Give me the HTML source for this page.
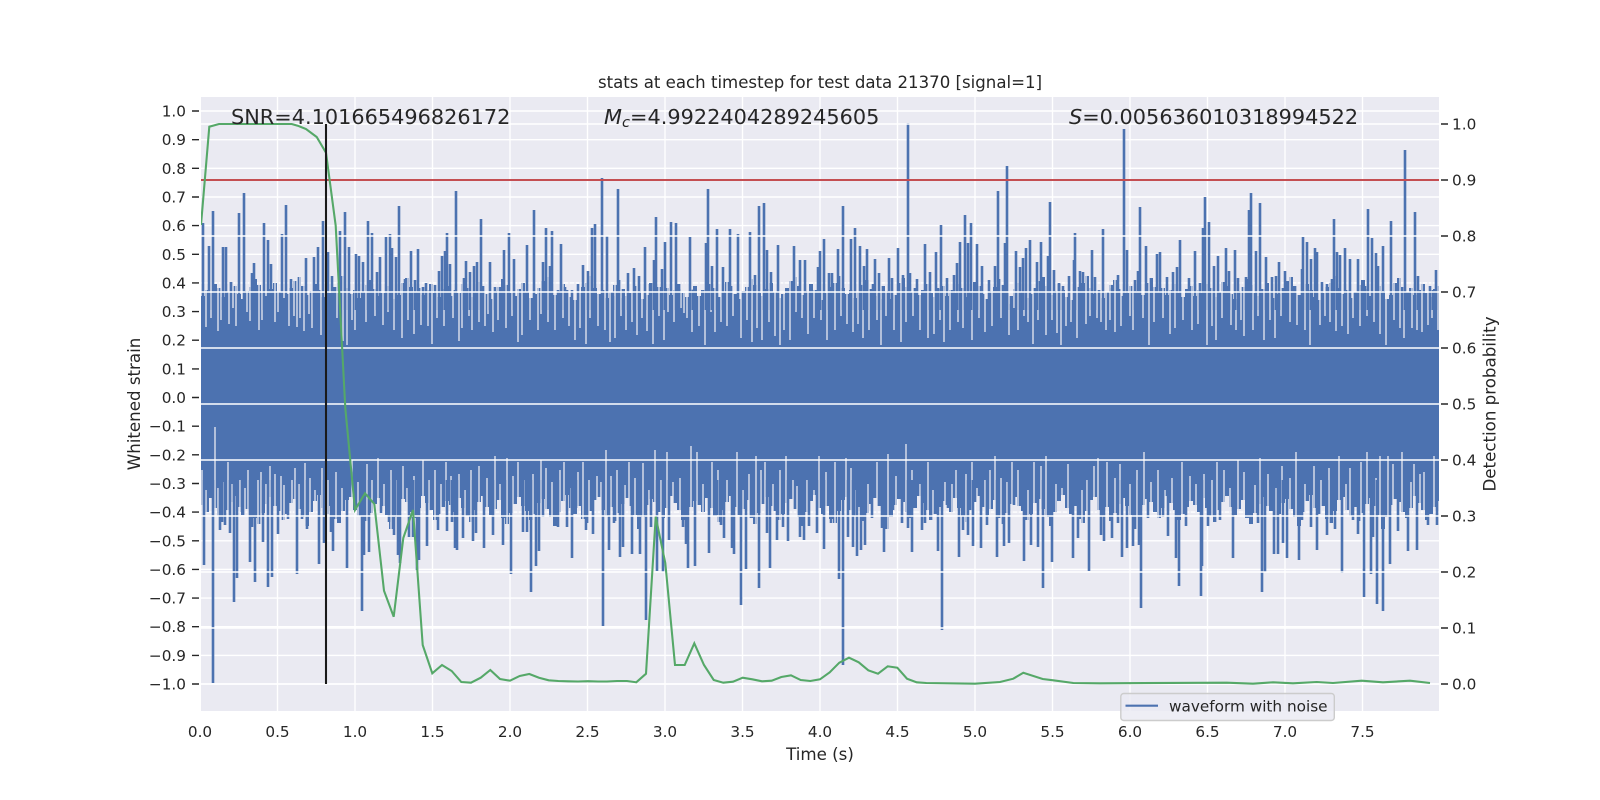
<!DOCTYPE html>
<html><head><meta charset="utf-8"><title>stats at each timestep</title>
<style>html,body{margin:0;padding:0;background:#fff}svg{display:block}text{font-family:"DejaVu Sans","Liberation Sans",sans-serif;fill:#262626}</style>
</head><body>
<svg width="1600" height="800" viewBox="0 0 1600 800" xmlns="http://www.w3.org/2000/svg">
<defs><clipPath id="ax"><rect x="201" y="97" width="1238" height="614"/></clipPath>
<path id="u" d="M0 310V296h4V290h4V293h4V284h4V288h4V297h4V292h4V282h4V286h4V294h4V299h4V291h4V287h4V279h4V285h4V293h4V296h4V289h4V283h4V292h4V298h4V294h4V288h4V281h4V277h4V286h4V295h4V291h4V284h4V290h4V297h4V300h4V293h4V287h4V283h4V276h4V288h4V294h4V290h4V298h4V292h4V285h4V280h4V289h4V296h4V293h4V286h4V291h4V299h4V295h4V283h4V278h4V287h4V292h4V288h4V295h4V290h4V284h4V293h4V297h4V289h4V286h4V310Z"/>
<path id="l" d="M0 480V505h4V512h4V498h4V508h4V516h4V522h4V510h4V502h4V496h4V507h4V515h4V509h4V500h4V518h4V524h4V513h4V504h4V497h4V506h4V511h4V520h4V514h4V503h4V499h4V509h4V517h4V526h4V512h4V501h4V495h4V508h4V514h4V506h4V519h4V523h4V511h4V500h4V497h4V510h4V516h4V507h4V521h4V513h4V504h4V498h4V506h4V515h4V529h4V517h4V505h4V499h4V502h4V512h4V518h4V508h4V496h4V503h4V510h4V520h4V514h4V507h4V501h4V480Z"/>
</defs>
<rect width="1600" height="800" fill="#fff"/>
<rect x="201" y="97" width="1238" height="614" fill="#eaeaf2"/>
<path fill="none" stroke="#fff" stroke-width="1.39" d="M201 111H1439M201 139.7H1439M201 168.3H1439M201 197H1439M201 225.6H1439M201 254.3H1439M201 282.9H1439M201 311.6H1439M201 340.2H1439M201 368.9H1439M201 397.5H1439M201 426.2H1439M201 454.8H1439M201 483.5H1439M201 512.1H1439M201 540.8H1439M201 569.4H1439M201 598.1H1439M201 626.7H1439M201 655.4H1439M201 684H1439M277.5 97V711M355 97V711M432.5 97V711M510 97V711M587.5 97V711M665 97V711M742.5 97V711M820 97V711M897.5 97V711M975 97V711M1052.5 97V711M1130 97V711M1207.5 97V711M1285 97V711M1362.5 97V711"/>
<g clip-path="url(#ax)">
<rect x="201" y="300" width="1238" height="192" fill="#4c72b0"/>
<g fill="#4c72b0"><use href="#u" x="201"/><use href="#u" x="449"/><use href="#u" x="697"/><use href="#u" x="945"/><use href="#u" x="1193"/><use href="#l" x="201"/><use href="#l" x="449"/><use href="#l" x="697"/><use href="#l" x="945"/><use href="#l" x="1193"/></g>
<path fill="none" stroke="#eaeaf2" stroke-width="1.3" d="M206 270V327M211 270V318M218 270V331M221 270V320M229 270V324M233 270V308M236 270V326M247 270V312M250 270V321M259 270V330M262 270V320M275 270V322M278 270V312M289 270V326M294 270V316M297 270V327M300 270V318M304 270V331M309 270V314M312 270V328M321 270V335M326 270V310M337 270V318M343 270V341M347 270V345M352 270V320M355 270V330M366 270V322M375 270V316M383 270V325M388 270V312M394 270V330M402 270V338M408 270V320M414 270V334M421 270V325M428 270V326M432 270V344M437 270V318M444 270V326M453 270V318M459 270V341M462 270V328M469 270V316M472 270V330M479 270V322M485 270V326M488 270V314M493 270V332M498 270V320M506 270V328M512 270V316M518 270V342M522 270V335M530 270V320M538 270V330M541 270V314M548 270V322M555 270V330M563 270V318M569 270V326M575 270V340M580 270V328M586 270V344M590 270V318M598 270V326M605 270V330M610 270V342M615 270V338M621 270V316M626 270V330M632 270V322M637 270V335M642 270V318M647 270V331M653 270V344M659 270V316M664 270V340M668 270V312M674 270V322M681 270V308M684 270V313M687 270V318M692 270V332M699 270V326M705 270V345M711 270V312M715 270V332M721 270V322M727 270V326M733 270V316M741 270V338M747 270V320M752 270V342M757 270V328M762 270V340M769 270V322M775 270V336M780 270V345M784 270V330M790 270V340M796 270V312M802 270V318M808 270V334M814 270V318M821 270V320M827 270V340M835 270V330M841 270V316M847 270V324M853 270V332M858 270V324M863 270V338M869 270V330M877 270V320M881 270V345M886 270V316M894 270V330M901 270V342M906 270V322M913 270V316M920 270V330M928 270V338M934 270V334M940 270V320M944 270V342M950 270V330M958 270V322M963 270V328M972 270V340M979 270V318M985 270V332M992 270V326M1001 270V318M1009 270V335M1014 270V308M1018 270V330M1024 270V316M1028 270V322M1033 270V344M1038 270V320M1046 270V335M1052 270V320M1057 270V333M1061 270V345M1066 270V326M1071 270V322M1077 270V338M1086 270V324M1090 270V316M1097 270V318M1101 270V322M1106 270V330M1110 270V320M1115 270V332M1121 270V326M1130 270V316M1133 270V330M1143 270V318M1149 270V345M1154 270V322M1163 270V318M1170 270V334M1175 270V328M1183 270V320M1192 270V330M1198 270V324M1207 270V345M1212 270V326M1216 270V340M1222 270V318M1231 270V325M1236 270V330M1241 270V320M1244 270V336M1253 270V330M1258 270V316M1264 270V340M1270 270V320M1275 270V338M1281 270V316M1290 270V322M1297 270V325M1305 270V330M1310 270V345M1320 270V325M1325 270V316M1330 270V322M1336 270V331M1342 270V326M1348 270V334M1353 270V318M1360 270V326M1367 270V316M1374 270V322M1380 270V334M1386 270V345M1394 270V320M1400 270V328M1404 270V338M1412 270V328M1417 270V330M1422 270V332M1428 270V325M1432 270V318M1438 270V330"/>
<path fill="none" stroke="#eaeaf2" stroke-width="1.3" d="M202 530V470M206 530V490M215 530V427M218 530V488M224 530V482M228 530V462M232 530V484M240 530V480M245 530V488M248 530V470M258 530V480M261 530V472M266 530V484M270 530V466M275 530V474M281 530V476M284 530V485M292 530V480M295 530V468M299 530V484M305 530V463M310 530V478M315 530V490M322 530V468M328 530V480M336 530V472M342 530V488M352 530V460M358 530V482M367 530V464M372 530V480M378 530V458M384 530V484M391 530V470M397 530V480M403 530V466M407 530V488M414 530V476M423 530V460M429 530V480M435 530V470M441 530V484M446 530V462M451 530V476M459 530V474M465 530V490M471 530V470M479 530V466M487 530V478M495 530V456M500 530V484M507 530V458M513 530V476M518 530V462M524 530V480M533 530V474M541 530V460M546 530V468M552 530V482M560 530V470M564 530V462M571 530V488M578 530V472M583 530V462M589 530V480M597 530V476M601 530V482M606 530V450M611 530V476M617 530V470M625 530V485M629 530V462M635 530V478M643 530V463M649 530V490M655 530V450M661 530V480M667 530V452M673 530V482M680 530V478M691 530V446M697 530V452M703 530V484M712 530V462M718 530V470M727 530V480M737 530V452M743 530V490M749 530V474M756 530V456M761 530V470M765 530V462M773 530V484M780 530V470M786 530V456M793 530V480M797 530V486M807 530V480M814 530V490M819 530V456M826 530V472M835 530V462M846 530V458M851 530V468M856 530V490M868 530V484M877 530V462M888 530V454M896 530V476M906 530V444M912 530V470M920 530V484M928 530V462M933 530V490M945 530V482M952 530V484M956 530V470M966 530V474M972 530V462M977 530V488M985 530V480M990 530V470M995 530V456M1001 530V478M1007 530V482M1012 530V462M1018 530V470M1028 530V490M1034 530V462M1041 530V466M1046 530V456M1056 530V484M1062 530V488M1068 530V464M1082 530V490M1087 530V480M1094 530V466M1098 530V458M1107 530V462M1115 530V478M1120 530V464M1130 530V484M1137 530V470M1144 530V452M1151 530V482M1158 530V470M1165 530V490M1172 530V478M1182 530V462M1190 530V476M1196 530V484M1204 530V474M1212 530V480M1217 530V462M1224 530V470M1230 530V488M1238 530V460M1244 530V472M1255 530V485M1260 530V458M1268 530V474M1276 530V488M1282 530V466M1290 530V478M1296 530V452M1305 530V484M1314 530V466M1321 530V480M1329 530V468M1339 530V456M1346 530V484M1350 530V468M1361 530V462M1367 530V452M1376 530V478M1380 530V456M1388 530V456M1393 530V464M1402 530V452M1411 530V482M1414 530V464M1420 530V474M1424 530V472M1434 530V456"/>
<path fill="none" stroke="#4c72b0" stroke-width="2.6" d="M203 310V223M209 310V246M213 310V211M223 310V247M226 310V247M239 310V213M244 310V193M252 310V273M254 310V263M264 310V223M268 310V240M271 310V264M282 310V234M286 310V205M291 310V279M306 310V258M314 310V257M318 310V247M323 310V221M328 310V252M332 310V276M340 310V231M345 310V212M349 310V247M356 310V254M359 310V256M363 310V262M368 310V221M372 310V233M377 310V272M380 310V257M386 310V237M390 310V234M392 310V248M396 310V257M399 310V206M405 310V279M411 310V251M415 310V280M418 310V249M423 310V287M426 310V283M435 310V285M439 310V271M442 310V256M445 310V251M447 310V233M450 310V264M456 310V191M464 310V278M466 310V261M470 310V272M474 310V266M477 310V262M481 310V219M490 310V262M495 310V287M504 310V250M509 310V233M514 310V259M527 310V245M534 310V210M543 310V262M546 310V228M550 310V266M552 310V231M558 310V290M561 310V244M565 310V287M572 310V290M578 310V284M583 310V265M588 310V271M592 310V228M595 310V224M602 310V178M607 310V236M613 310V296M618 310V189M623 310V298M628 310V273M634 310V268M639 310V276M645 310V247M650 310V284M654 310V260M656 310V217M662 310V269M665 310V242M671 310V222M676 310V223M679 310V289M690 310V237M693 310V290M696 310V297M702 310V298M706 310V243M708 310V189M712 310V266M717 310V229M723 310V267M730 310V229M738 310V234M750 310V232M755 310V275M759 310V206M764 310V203M767 310V250M771 310V272M778 310V245M787 310V293M794 310V246M800 310V260M805 310V260M818 310V267M820 310V251M824 310V239M829 310V273M832 310V273M838 310V249M843 310V206M851 310V239M855 310V228M860 310V246M864 310V266M867 310V249M873 310V284M875 310V259M879 310V273M883 310V299M889 310V258M892 310V278M898 310V248M903 310V275M908 310V123M910 310V273M917 310V279M925 310V244M930 310V272M936 310V252M938 310V288M941 310V225M947 310V278M954 310V275M957 310V263M960 310V242M965 310V215M968 310V243M971 310V223M977 310V244M982 310V266M989 310V280M995 310V266M998 310V191M1005 310V243M1007 310V166M1011 310V304M1016 310V251M1020 310V267M1023 310V258M1026 310V248M1030 310V240M1037 310V262M1041 310V242M1048 310V256M1050 310V202M1054 310V270M1059 310V283M1063 310V286M1069 310V276M1074 310V260M1075 310V233M1080 310V271M1083 310V272M1092 310V250M1095 310V277M1103 310V229M1112 310V288M1118 310V275M1124 310V129M1127 310V250M1135 310V280M1138 310V271M1140 310V207M1146 310V246M1157 310V254M1160 310V252M1167 310V277M1173 310V272M1177 310V267M1180 310V240M1189 310V278M1195 310V251M1200 310V283M1203 310V228M1205 310V197M1209 310V222M1214 310V266M1218 310V256M1226 310V248M1229 310V271M1235 310V250M1238 310V278M1246 310V277M1249 310V210M1251 310V193M1256 310V251M1260 310V203M1266 310V257M1272 310V277M1276 310V276M1279 310V262M1285 310V271M1287 310V282M1294 310V297M1302 310V269M1303 310V237M1307 310V242M1311 310V259M1315 310V248M1317 310V252M1322 310V282M1327 310V284M1332 310V279M1334 310V219M1337 310V252M1340 310V255M1345 310V248M1350 310V259M1358 310V259M1362 310V285M1365 310V286M1368 310V209M1372 310V238M1376 310V253M1378 310V266M1383 310V246M1391 310V221M1397 310V289M1405 310V150M1415 310V212M1418 310V276M1425 310V298M1430 310V286M1433 310V290M1436 310V270"/>
<path fill="none" stroke="#4c72b0" stroke-width="2.6" d="M204 480V565M209 480V498M213 480V683M220 480V530M225 480V525M230 480V533M234 480V602M237 480V578M242 480V512M250 480V562M252 480V527M255 480V582M263 480V542M268 480V587M272 480V577M278 480V534M288 480V519M297 480V574M302 480V519M307 480V529M319 480V564M324 480V543M331 480V532M333 480V551M347 480V568M362 480V611M364 480V555M369 480V552M381 480V513M389 480V522M394 480V535M398 480V555M400 480V563M409 480V537M413 480V537M417 480V570M419 480V560M427 480V546M438 480V530M447 480V531M452 480V522M455 480V548M457 480V550M463 480V538M473 480V541M476 480V533M484 480V548M493 480V535M503 480V545M505 480V518M511 480V574M523 480V532M527 480V532M531 480V592M536 480V566M539 480V551M543 480V517M558 480V527M567 480V527M572 480V558M576 480V508M586 480V530M593 480V534M603 480V626M609 480V550M614 480V523M620 480V557M623 480V547M632 480V554M640 480V554M646 480V620M651 480V527M657 480V571M663 480V572M669 480V540M683 480V527M686 480V544M688 480V568M695 480V566M709 480V553M717 480V515M721 480V525M724 480V538M732 480V548M734 480V554M741 480V605M746 480V569M752 480V517M759 480V588M767 480V533M770 480V568M777 480V540M783 480V527M788 480V541M800 480V537M804 480V540M809 480V526M817 480V533M824 480V549M831 480V523M839 480V579M843 480V665M848 480V537M853 480V547M857 480V556M861 480V550M865 480V545M872 480V518M882 480V528M884 480V552M893 480V510M902 480V523M908 480V528M912 480V552M922 480V530M925 480V523M938 480V551M942 480V630M948 480V508M959 480V557M963 480V530M968 480V535M973 480V546M981 480V548M987 480V525M997 480V557M1004 480V546M1009 480V543M1014 480V505M1024 480V561M1031 480V545M1038 480V547M1043 480V588M1052 480V562M1073 480V558M1078 480V538M1089 480V571M1101 480V535M1104 480V541M1112 480V538M1118 480V523M1122 480V557M1127 480V548M1133 480V546M1139 480V545M1141 480V608M1148 480V518M1163 480V517M1168 480V536M1176 480V558M1179 480V586M1186 480V526M1201 480V596M1202 480V566M1208 480V526M1220 480V520M1233 480V558M1247 480V510M1250 480V517M1258 480V523M1262 480V592M1265 480V572M1274 480V554M1278 480V554M1283 480V543M1287 480V558M1299 480V560M1302 480V520M1311 480V527M1317 480V550M1327 480V535M1335 480V529M1342 480V573M1353 480V520M1358 480V534M1364 480V597M1371 480V574M1373 480V537M1377 480V604M1383 480V611M1390 480V564M1398 480V531M1408 480V551M1417 480V550M1428 480V525M1437 480V525"/>
<path fill="none" stroke="#fff" stroke-width="1.39" d="M201 124H1439M201 180H1439M201 236H1439M201 292H1439M201 348H1439M201 404H1439M201 460H1439M201 516H1439M201 572H1439M201 628H1439M201 684H1439"/>
<path d="M201 180H1439" fill="none" stroke="#c44e52" stroke-width="2.08"/>
<path d="M201 225 209.3 126.7 219 124H291.7L297.7 125.7 306 129 316.7 137 326 152.7 335.7 225.7 345.3 408 355 510 365 493.3 374.3 504 384 590.7 393.7 616.7 403.3 538 413 510 422.7 645 432.3 673.3 442 665 451.7 671 461.3 682 471 682.7 480.7 677.7 490.3 670 500 679 510 680.7 519.7 676 529.3 674 539 677.7 548.7 680.3 558.3 681 568 681.3 578 681.5 588 681.2 598 681.5 607 681.5 617 681 627 681 636.3 682.3 646 673.7 655.7 516.7 665.3 563 675 665 684.7 665 694.3 643.3 704 665 713.7 680 723.3 682.7 733 681.7 742.7 677.7 752.3 679.3 762 681.3 771.7 680.7 781.3 677 791 675.3 800.7 680 810.3 681 820 679.3 829.7 672.3 839.3 662.7 849 657.7 858.7 662.3 868.3 670.3 878 673.7 887.7 666.3 897.3 667.7 907 678.7 916.7 682.3 926.3 683 975 683.7 1000 682 1013.3 678.7 1023.3 672.7 1042.7 679 1053.3 680.3 1073.3 683 1100 683.3 1226.7 682.7 1253 683.7 1273 682.3 1293 683.3 1316.7 682 1333 683 1361.7 680.7 1383 682.3 1410 680.7 1430 683" fill="none" stroke="#55a868" stroke-width="2.08"/>
<path d="M326 124V684" fill="none" stroke="#1a1a1a" stroke-width="2.08"/>
</g>
<path fill="none" stroke="#262626" stroke-width="1.39" d="M192 111h7M192 139.7h7M192 168.3h7M192 197h7M192 225.6h7M192 254.3h7M192 282.9h7M192 311.6h7M192 340.2h7M192 368.9h7M192 397.5h7M192 426.2h7M192 454.8h7M192 483.5h7M192 512.1h7M192 540.8h7M192 569.4h7M192 598.1h7M192 626.7h7M192 655.4h7M192 684h7M1441 124h7M1441 180h7M1441 236h7M1441 292h7M1441 348h7M1441 404h7M1441 460h7M1441 516h7M1441 572h7M1441 628h7M1441 684h7"/>
<g font-size="15.28" text-anchor="end">
<text x="186" y="116.5">1.0</text><text x="186" y="145.2">0.9</text><text x="186" y="173.8">0.8</text><text x="186" y="202.5">0.7</text><text x="186" y="231.1">0.6</text><text x="186" y="259.8">0.5</text><text x="186" y="288.4">0.4</text><text x="186" y="317.1">0.3</text><text x="186" y="345.7">0.2</text><text x="186" y="374.4">0.1</text><text x="186" y="403">0.0</text><text x="186" y="431.7">−0.1</text><text x="186" y="460.3">−0.2</text><text x="186" y="489">−0.3</text><text x="186" y="517.6">−0.4</text><text x="186" y="546.3">−0.5</text><text x="186" y="574.9">−0.6</text><text x="186" y="603.6">−0.7</text><text x="186" y="632.2">−0.8</text><text x="186" y="660.9">−0.9</text><text x="186" y="689.5">−1.0</text>
</g>
<g font-size="15.28">
<text x="1452" y="129.5">1.0</text><text x="1452" y="185.5">0.9</text><text x="1452" y="241.5">0.8</text><text x="1452" y="297.5">0.7</text><text x="1452" y="353.5">0.6</text><text x="1452" y="409.5">0.5</text><text x="1452" y="465.5">0.4</text><text x="1452" y="521.5">0.3</text><text x="1452" y="577.5">0.2</text><text x="1452" y="633.5">0.1</text><text x="1452" y="689.5">0.0</text>
</g>
<g font-size="15.28" text-anchor="middle">
<text x="200" y="737">0.0</text><text x="277.5" y="737">0.5</text><text x="355" y="737">1.0</text><text x="432.5" y="737">1.5</text><text x="510" y="737">2.0</text><text x="587.5" y="737">2.5</text><text x="665" y="737">3.0</text><text x="742.5" y="737">3.5</text><text x="820" y="737">4.0</text><text x="897.5" y="737">4.5</text><text x="975" y="737">5.0</text><text x="1052.5" y="737">5.5</text><text x="1130" y="737">6.0</text><text x="1207.5" y="737">6.5</text><text x="1285" y="737">7.0</text><text x="1362.5" y="737">7.5</text>
</g>
<text x="820" y="88" font-size="16.6" text-anchor="middle">stats at each timestep for test data 21370 [signal=1]</text>
<text x="820" y="760" font-size="16.67" text-anchor="middle">Time (s)</text>
<text transform="translate(140 404) rotate(-90)" font-size="16.67" text-anchor="middle">Whitened strain</text>
<text transform="translate(1495.5 404) rotate(-90)" font-size="16.67" text-anchor="middle">Detection probability</text>
<text x="231" y="124" font-size="20.83">SNR=4.101665496826172</text>
<text x="604" y="124" font-size="20.83"><tspan font-style="italic">M</tspan><tspan font-style="italic" font-size="14.6" dy="3">c</tspan><tspan dy="-3">=4.9922404289245605</tspan></text>
<text x="1069" y="124" font-size="20.83"><tspan font-style="italic">S</tspan>=0.005636010318994522</text>
<rect x="1120.8" y="693.5" width="213.5" height="27" rx="3" fill="#eaeaf2" fill-opacity=".8" stroke="#cccccc" stroke-width="1.39"/>
<path d="M1125.5 705.7H1158" fill="none" stroke="#4c72b0" stroke-width="2.08"/>
<text x="1169" y="711.5" font-size="15.28">waveform with noise</text>
</svg>
</body></html>
